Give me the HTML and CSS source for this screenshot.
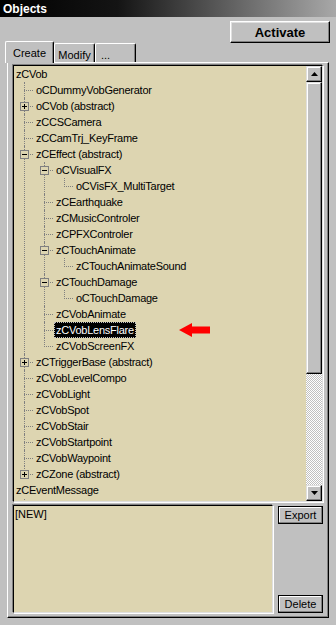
FILE: index.html
```html
<html lang="en">

<head>
    <meta charset="UTF-8">
    <meta name="viewport" content="width=device-width, initial-scale=1.0">
    <title>Objects</title>
    <link rel="stylesheet" href="styles.css">
</head>

<body>
    <div class="window">
        <div class="titlebar">Objects</div>

        <div class="header">
            <div class="tabs">
                <div class="tab selected">Create</div>
                <div class="tab">Modify</div>
                <div class="tab dots">...</div>
            </div>
            <button class="btn activate">Activate</button>
        </div>

        <div class="panel">
            <div class="treebox">
                <div class="tree-list">
                    <ul class="tree">
                        <li class="root">
                            <span class="label">zCVob</span>
                            <ul>
                                <li><span class="label">oCDummyVobGenerator</span></li>
                                <li><span class="exp plus"></span><span class="label">oCVob (abstract)</span></li>
                                <li><span class="label">zCCSCamera</span></li>
                                <li><span class="label">zCCamTrj_KeyFrame</span></li>
                                <li>
                                    <span class="exp"></span><span class="label">zCEffect (abstract)</span>
                                    <ul>
                                        <li>
                                            <span class="exp"></span><span class="label">oCVisualFX</span>
                                            <ul>
                                                <li><span class="label">oCVisFX_MultiTarget</span></li>
                                            </ul>
                                        </li>
                                        <li><span class="label">zCEarthquake</span></li>
                                        <li><span class="label">zCMusicControler</span></li>
                                        <li><span class="label">zCPFXControler</span></li>
                                        <li>
                                            <span class="exp"></span><span class="label">zCTouchAnimate</span>
                                            <ul>
                                                <li><span class="label">zCTouchAnimateSound</span></li>
                                            </ul>
                                        </li>
                                        <li>
                                            <span class="exp"></span><span class="label">zCTouchDamage</span>
                                            <ul>
                                                <li><span class="label">oCTouchDamage</span></li>
                                            </ul>
                                        </li>
                                        <li><span class="label">zCVobAnimate</span></li>
                                        <li><span class="label selected">zCVobLensFlare</span></li>
                                        <li><span class="label">zCVobScreenFX</span></li>
                                    </ul>
                                </li>
                                <li><span class="exp plus"></span><span class="label">zCTriggerBase (abstract)</span></li>
                                <li><span class="label">zCVobLevelCompo</span></li>
                                <li><span class="label">zCVobLight</span></li>
                                <li><span class="label">zCVobSpot</span></li>
                                <li><span class="label">zCVobStair</span></li>
                                <li><span class="label">zCVobStartpoint</span></li>
                                <li><span class="label">zCVobWaypoint</span></li>
                                <li><span class="exp plus"></span><span class="label">zCZone (abstract)</span></li>
                            </ul>
                        </li>
                        <li class="root more">
                            <span class="label">zCEventMessage</span>
                        </li>
                    </ul>

                    <!-- red pointer next to the selected item -->
                    <svg class="pointer" width="32" height="15" viewBox="0 0 32 15">
                        <polygon points="0,7 13,0 13,3.5 31,3.5 31,10.5 13,10.5 13,14" fill="#ff0000"/>
                    </svg>
                </div>

                <div class="scrollbar">
                    <div class="sb-btn">
                        <svg width="7" height="4" viewBox="0 0 7 4"><polygon points="3.5,0 7,4 0,4" fill="#000"/></svg>
                    </div>
                    <div class="sb-thumb"></div>
                    <div class="sb-track"></div>
                    <div class="sb-btn">
                        <svg width="7" height="4" viewBox="0 0 7 4"><polygon points="0,0 7,0 3.5,4" fill="#000"/></svg>
                    </div>
                </div>
            </div>

            <div class="bottom">
                <div class="memo">[NEW]</div>
                <div class="side">
                    <button class="btn small">Export</button>
                    <button class="btn small">Delete</button>
                </div>
            </div>
        </div>
    </div>
</body>

</html>
```

FILE: styles.css
```css
body {
    margin: 0;
    background-color: #c0c0c0;
    font-family: "Liberation Sans", Arial, sans-serif;
    font-size: 11px;
    color: #000;
}
.window {
    width: 336px;
    height: 625px;
    display: flex;
    flex-direction: column;
}
.titlebar {
    height: 17px;
    line-height: 18px;
    padding-left: 3px;
    overflow: hidden;
    color: #fff;
    font-weight: bold;
    font-size: 12px;
    background: linear-gradient(to right, #000 0%, #141414 35%, #a8a8a8 100%);
}
.header {
    height: 45px;
    display: flex;
    justify-content: space-between;
    align-items: flex-end;
    padding: 0 6px 0 5px;
}
.tabs {
    display: flex;
    align-items: flex-end;
    position: relative;
    z-index: 1;
}
.tab {
    box-sizing: border-box;
    width: 41px;
    height: 19px;
    padding-top: 3px;
    line-height: 16px;
    text-align: center;
    background-color: #c0c0c0;
    border-top: 1px solid #fff;
    border-left: 1px solid #fff;
    border-right: 1px solid #000;
    border-radius: 2px 2px 0 0;
    box-shadow: inset -1px 0 #808080;
}
.tab.selected {
    width: 49px;
    height: 22px;
    margin-bottom: -1px;
    padding-top: 3px;
}
.tab.dots {
    text-align: left;
    padding-left: 5px;
}
.btn {
    box-sizing: border-box;
    margin: 0;
    padding: 0;
    font-family: "Liberation Sans", Arial, sans-serif;
    font-size: 11px;
    color: #000;
    background-color: #c0c0c0;
    border: 1px solid;
    border-color: #fff #000 #000 #fff;
    box-shadow: inset -1px -1px #808080, inset 1px 1px #dfdfdf;
}
.activate {
    align-self: flex-start;
    margin-top: 4px;
    width: 100px;
    height: 22px;
    font-size: 13px;
    font-weight: bold;
}
.small {
    width: 45px;
    height: 18px;
    border-color: #000;
    box-shadow: inset -1px -1px #808080, inset 1px 1px #fff;
}
.panel {
    box-sizing: border-box;
    width: 322px;
    height: 556px;
    margin-left: 7px;
    padding: 1px 5px 5px 5px;
    border: 1px solid;
    border-color: #fff #000 #000 #fff;
    box-shadow: inset -1px -1px #808080;
    display: flex;
    flex-direction: column;
}
.treebox,
.memo {
    border: 1px solid;
    border-color: #000 #dfdfdf #dfdfdf #000;
    box-shadow: -1px -1px #808080, 1px 1px #fff;
    background-color: #ddd5b1;
}
.treebox {
    height: 437px;
    display: flex;
    box-sizing: border-box;
    margin-top: 1px;
}
.tree-list {
    flex: 1;
    position: relative;
    overflow: hidden;
}
.tree,
.tree ul {
    list-style: none;
    margin: 0;
    padding: 0;
}
.tree ul {
    padding-left: 20px;
}
.tree li {
    position: relative;
    line-height: 16px;
}
.tree ul li::before {
    content: "";
    position: absolute;
    left: -10px;
    top: 0;
    height: 100%;
    border-left: 1px dotted #808080;
}
.tree ul li:last-child::before {
    height: 9px;
}
.tree ul li::after {
    content: "";
    position: absolute;
    left: -10px;
    top: 8px;
    width: 9px;
    border-top: 1px dotted #808080;
}
/* start of the hidden child branch below the last visible row */
.tree li.more {
    padding-bottom: 4px;
}
.tree li.more::after {
    content: "";
    position: absolute;
    left: 10px;
    top: 17px;
    height: 3px;
    border-left: 1px dotted #808080;
}
.label {
    display: block;
    width: fit-content;
    height: 16px;
    padding: 0 2px;
    white-space: nowrap;
    letter-spacing: -0.25px;
}
.label.selected {
    background-color: #000;
    color: #fff;
    outline: 1px dotted #c0c0c0;
    outline-offset: -1px;
}
.exp {
    position: absolute;
    left: -14px;
    top: 4px;
    width: 7px;
    height: 7px;
    border: 1px solid #808080;
    background-color: #ddd5b1;
    z-index: 1;
}
.exp::before {
    content: "";
    position: absolute;
    left: 1px;
    top: 3px;
    width: 5px;
    height: 1px;
    background-color: #000;
}
.exp.plus::after {
    content: "";
    position: absolute;
    left: 3px;
    top: 1px;
    width: 1px;
    height: 5px;
    background-color: #000;
}
.pointer {
    position: absolute;
    left: 165px;
    top: 257px;
}
.scrollbar {
    width: 16px;
    display: flex;
    flex-direction: column;
}
.sb-btn,
.sb-thumb {
    box-sizing: border-box;
    background-color: #c0c0c0;
    border: 1px solid;
    border-color: #dfdfdf #000 #000 #dfdfdf;
    box-shadow: inset -1px -1px #808080, inset 1px 1px #fff;
}
.sb-btn {
    height: 16px;
    display: flex;
    justify-content: center;
    align-items: center;
}
.sb-thumb {
    height: 292px;
}
.sb-track {
    flex: 1;
    background-image: repeating-conic-gradient(#fff 0 25%, #c0c0c0 0 50%);
    background-size: 2px 2px;
}
.bottom {
    display: flex;
    gap: 5px;
    margin-top: 3px;
    height: 108px;
}
.memo {
    box-sizing: border-box;
    width: 260px;
    height: 108px;
    padding: 0 1px;
    line-height: 16px;
}
.side {
    width: 45px;
    display: flex;
    flex-direction: column;
    justify-content: space-between;
    padding-top: 1px;
}
```
